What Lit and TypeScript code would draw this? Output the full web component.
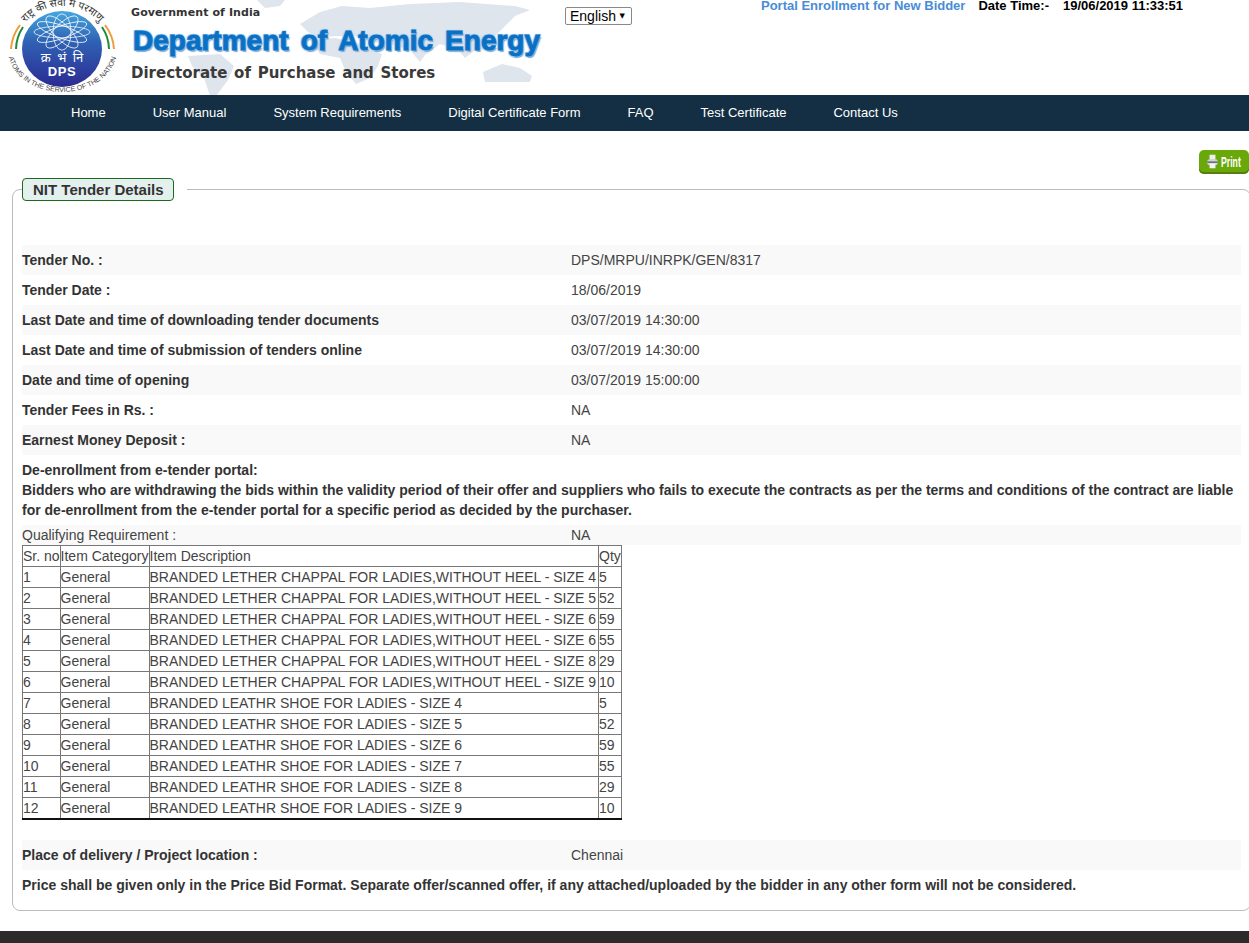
import { LitElement, html, css, svg } from 'lit';
import { customElement } from 'lit/decorators.js';

const NAV = ['Home', 'User Manual', 'System Requirements', 'Digital Certificate Form', 'FAQ', 'Test Certificate', 'Contact Us'];

const DETAILS_TOP = [
  ['Tender No. :', 'DPS/MRPU/INRPK/GEN/8317'],
  ['Tender Date :', '18/06/2019'],
  ['Last Date and time of downloading tender documents', '03/07/2019 14:30:00'],
  ['Last Date and time of submission of tenders online', '03/07/2019 14:30:00'],
  ['Date and time of opening', '03/07/2019 15:00:00'],
  ['Tender Fees in Rs. :', 'NA'],
  ['Earnest Money Deposit :', 'NA'],
];

const CHAPPAL = 'BRANDED LETHER CHAPPAL FOR LADIES,WITHOUT HEEL - SIZE ';
const SHOE = 'BRANDED LEATHR SHOE FOR LADIES - SIZE ';
const ITEMS = [
  [CHAPPAL + '4', '5'],
  [CHAPPAL + '5', '52'],
  [CHAPPAL + '6', '59'],
  [CHAPPAL + '6', '55'],
  [CHAPPAL + '8', '29'],
  [CHAPPAL + '9', '10'],
  [SHOE + '4', '5'],
  [SHOE + '5', '52'],
  [SHOE + '6', '59'],
  [SHOE + '7', '55'],
  [SHOE + '8', '29'],
  [SHOE + '9', '10'],
];

const ORBITS = [0, 30, 60, 90, 120, 150];

@customElement('dps-logo')
class DpsLogo extends LitElement {
  static styles = css`
    :host {
      display: block;
      width: 130px;
      height: 95px;
      flex: none;
    }
    svg {
      display: block;
    }
    .hindi {
      font: 10.5px "Noto Sans", "DejaVu Sans", sans-serif;
      fill: #333;
    }
    .motto {
      font: 7px "Liberation Sans", sans-serif;
      fill: #444;
    }
    .mark {
      font: 13px "Noto Sans", "DejaVu Sans", sans-serif;
      fill: #fff;
      word-spacing: 3px;
    }
    .dps {
      font: bold 13px "Liberation Sans", sans-serif;
      fill: #fff;
      letter-spacing: 0.6px;
    }
  `;

  render() {
    return html`<svg width="130" height="95" viewBox="0 0 130 95">
      <defs>
        <linearGradient id="disc" x1="0" y1="0" x2="0" y2="1">
          <stop offset="0" stop-color="#45a6de" />
          <stop offset="0.4" stop-color="#2f62b4" />
          <stop offset="1" stop-color="#2c2a92" />
        </linearGradient>
        <path id="top" d="M15 50 A47.5 44 0 0 1 110 50" />
        <path id="bottom" d="M8 50 A54.5 42 0 0 0 117 50" />
      </defs>
      <ellipse cx="62" cy="49" rx="40" ry="38" fill="url(#disc)" />
      <g transform="translate(62 32) scale(1 0.65)" fill="none" stroke="#fff" stroke-width="0.9">
        ${ORBITS.map((a) => svg`<ellipse rx="28" ry="9" transform="rotate(${a})" />`)}
      </g>
      <path d="M11 49 A50 46 0 0 1 20 25" fill="none" stroke="#f09a3a" stroke-width="2" />
      <path d="M16 49 A46 43 0 0 1 23 27" fill="none" stroke="#1d8a3c" stroke-width="2" />
      <path d="M114 49 A50 46 0 0 0 105 25" fill="none" stroke="#f09a3a" stroke-width="2" />
      <path d="M109 49 A46 43 0 0 0 102 27" fill="none" stroke="#1d8a3c" stroke-width="2" />
      <text class="hindi"><textPath href="#top" startOffset="50%" text-anchor="middle">राष्ट्र की सेवा में परमाणु</textPath></text>
      <text class="motto"><textPath href="#bottom" startOffset="50%" text-anchor="middle">ATOMS IN THE SERVICE OF THE NATION</textPath></text>
      <text class="mark" x="62" y="62" text-anchor="middle">क्र भं नि</text>
      <text class="dps" x="62" y="76" text-anchor="middle">DPS</text>
    </svg>`;
  }
}

@customElement('app-root')
class AppRoot extends LitElement {
  static styles = css`
    :host {
      display: block;
      font: 14px "Liberation Sans", Arial, sans-serif;
      color: #333;
      background: #fff;
      overflow: hidden;
    }
    .header {
      position: relative;
      height: 95px;
      display: flex;
      overflow: hidden;
    }
    .map {
      position: absolute;
      left: 120px;
      top: 0;
    }
    .brand {
      position: relative;
      margin-left: 1px;
      width: 434px;
      flex: none;
    }
    .gov {
      font: bold 11px "DejaVu Sans", sans-serif;
      letter-spacing: 0.1px;
      color: #333;
      margin-top: 5px;
      line-height: 15px;
    }
    .dept {
      font: bold 28px "Liberation Sans", sans-serif;
      color: #0a70c4;
      -webkit-text-stroke: 0.9px #0a70c4;
      text-shadow: -1px -1px 1px #a4cdf0, 1px -1px 1px #a4cdf0, -1px 1px 1px #a4cdf0, 1.5px 1.5px 1px #7fa9d2;
      line-height: 34px;
      margin: 4px 0 0 2px;
      word-spacing: 4.3px;
      white-space: nowrap;
    }
    .dir {
      font: bold 15px "DejaVu Sans", sans-serif;
      color: #3a3a3a;
      line-height: 20px;
      margin-top: 5px;
      word-spacing: 1.5px;
      white-space: nowrap;
    }
    .lang {
      position: relative;
      align-self: flex-start;
      margin-top: 7px;
      height: 18px;
    }
    .lang::after {
      content: "▼";
      position: absolute;
      right: 7px;
      top: 4px;
      font: 7px/10px "DejaVu Sans", sans-serif;
      color: #000;
      pointer-events: none;
    }
    select {
      display: block;
      appearance: none;
      height: 18px;
      width: 67px;
      font: 14px "Liberation Sans", sans-serif;
      color: #000;
      background: #fff;
      border: 1px solid #888;
      border-radius: 2px;
      padding: 0 0 0 4px;
    }
    .info {
      display: flex;
      margin-left: 129px;
      font-size: 13px;
      font-weight: bold;
      line-height: 11px;
      color: #000;
      white-space: nowrap;
    }
    .enroll {
      color: #4a8cd6;
      margin-right: 13px;
    }
    .stamp {
      margin-left: 14px;
    }
    .nav {
      height: 36px;
      box-sizing: border-box;
      padding: 0 0 1px 47.5px;
      background: #142f43;
      display: flex;
      align-items: center;
      font-size: 13px;
    }
    .nav a {
      padding: 0 23.5px;
      color: #fff;
      white-space: nowrap;
    }
    .toolbar {
      display: flex;
      justify-content: flex-end;
      padding-top: 19px;
      height: 24px;
    }
    .print {
      width: 50px;
      height: 24px;
      box-sizing: border-box;
      background: #6aa80a;
      border-radius: 5px;
      box-shadow: inset 0 -2px 0 #55800f;
      display: flex;
      align-items: center;
      gap: 3px;
      padding: 0 0 1px 8px;
      color: #fff;
      font: bold 14px "Liberation Sans", sans-serif;
    }
    .print svg {
      flex: none;
    }
    .print span {
      display: inline-block;
      width: 22px;
      transform: scaleX(0.62);
      transform-origin: left center;
    }
    fieldset {
      margin: 4px -2px 0 12px;
      padding: 0 9px;
      height: 731px;
      border: 1px solid #bbb;
      border-radius: 8px;
    }
    legend {
      padding: 0 13px 0 0;
      margin: 0;
    }
    .legend-box {
      display: block;
      height: 21px;
      line-height: 21px;
      padding: 0 9px 0 10px;
      font-size: 15px;
      font-weight: bold;
      background: #e3f0ee;
      border: 1px solid #1a6b1a;
      border-radius: 4px;
    }
    .rows {
      margin-top: 44px;
    }
    .row {
      display: grid;
      grid-template-columns: 549px 1fr;
      height: 30px;
      align-items: center;
    }
    .row.shade,
    .row:nth-child(odd) {
      background: #f9f9f9;
    }
    .label {
      font-weight: bold;
    }
    .value {
      color: #444;
    }
    .note {
      margin: 5px 0;
      font-weight: bold;
      line-height: 20px;
    }
    .row.req {
      height: 20px;
      background: #f9f9f9;
      color: #444;
    }
    table {
      border-collapse: collapse;
      border: 1px solid #111;
      border-bottom-width: 2px;
      color: #444;
      line-height: 16px;
    }
    td {
      border: 1px solid #777;
      padding: 2px 0;
      white-space: nowrap;
      height: 16px;
    }
    td:nth-child(3) {
      padding-right: 2px;
    }
    .after {
      margin-top: 20px;
    }
    .closing {
      margin-top: 6px;
      font-weight: bold;
      line-height: 18px;
      white-space: nowrap;
    }
    .footer {
      margin-top: 20px;
      height: 12px;
      background: #2b2b2b;
    }
  `;

  renderMap() {
    return svg`<svg class="map" width="440" height="95" viewBox="0 0 440 95">
      <g fill="#dfe5ed">
        <path d="M137 0 L165 0 L160 6 L145 8Z" />
        <path d="M68 56 L100 54 L114 66 L108 80 L96 96 L90 96 L84 78 L72 66Z" />
        <path d="M180 24 L200 12 L222 6 L250 8 L290 4 L340 2 L395 6 L410 10 L395 16 L385 26 L375 36 L368 52 L358 48 L345 58 L338 50 L320 44 L305 55 L300 62 L290 50 L270 44 L250 42 L235 36 L215 36 L200 38 L188 32Z" />
        <path d="M190 40 L215 38 L240 44 L262 54 L258 66 L250 78 L236 84 L226 72 L220 58 L200 54Z" />
        <path d="M363 72 L382 64 L400 68 L412 76 L410 82 L385 82 L365 82Z" />
      </g>
    </svg>`;
  }

  render() {
    return html`
      <div class="header">
        ${this.renderMap()}
        <dps-logo></dps-logo>
        <div class="brand">
          <div class="gov">Government of India</div>
          <div class="dept">Department of Atomic Energy</div>
          <div class="dir">Directorate of Purchase and Stores</div>
        </div>
        <div class="lang"><select><option>English</option></select></div>
        <div class="info">
          <span class="enroll">Portal Enrollment for New Bidder</span>
          <span>Date Time:-</span>
          <span class="stamp">19/06/2019 11:33:51</span>
        </div>
      </div>
      <nav class="nav">${NAV.map((n) => html`<a>${n}</a>`)}</nav>
      <div class="toolbar">
        <div class="print">
          <svg width="11" height="17" viewBox="0 0 13 17">
            <rect x="3" y="0.5" width="7" height="6" fill="#eee" />
            <rect x="0.5" y="6" width="12" height="6.5" rx="1.5" fill="#cfd4d8" />
            <rect x="0.5" y="8.5" width="12" height="1.5" fill="#555" />
            <rect x="3" y="11" width="7" height="5.5" fill="#f4f4f4" />
          </svg>
          <span>Print</span>
        </div>
      </div>
      <fieldset>
        <legend><span class="legend-box">NIT Tender Details</span></legend>
        <div class="rows">
          ${DETAILS_TOP.map(
            ([k, v]) => html`<div class="row">
              <div class="label">${k}</div>
              <div class="value">${v}</div>
            </div>`
          )}
        </div>
        <div class="note">
          De-enrollment from e-tender portal:<br />
          Bidders who are withdrawing the bids within the validity period of their offer and suppliers who fails to execute the contracts as per the terms and conditions of the contract are liable for de-enrollment from the e-tender portal for a specific period as decided by the purchaser.
        </div>
        <div class="row req">
          <div>Qualifying Requirement :</div>
          <div>NA</div>
        </div>
        <table>
          <tr><td>Sr. no</td><td>Item Category</td><td>Item Description</td><td>Qty</td></tr>
          ${ITEMS.map(
            ([desc, qty], i) => html`<tr>
              <td>${i + 1}</td>
              <td>General</td>
              <td>${desc}</td>
              <td>${qty}</td>
            </tr>`
          )}
        </table>
        <div class="after">
          <div class="row shade">
            <div class="label">Place of delivery / Project location :</div>
            <div class="value">Chennai</div>
          </div>
          <div class="closing">
            Price shall be given only in the Price Bid Format. Separate offer/scanned offer, if any attached/uploaded by the bidder in any other form will not be considered.
          </div>
        </div>
      </fieldset>
      <div class="footer"></div>
    `;
  }
}
